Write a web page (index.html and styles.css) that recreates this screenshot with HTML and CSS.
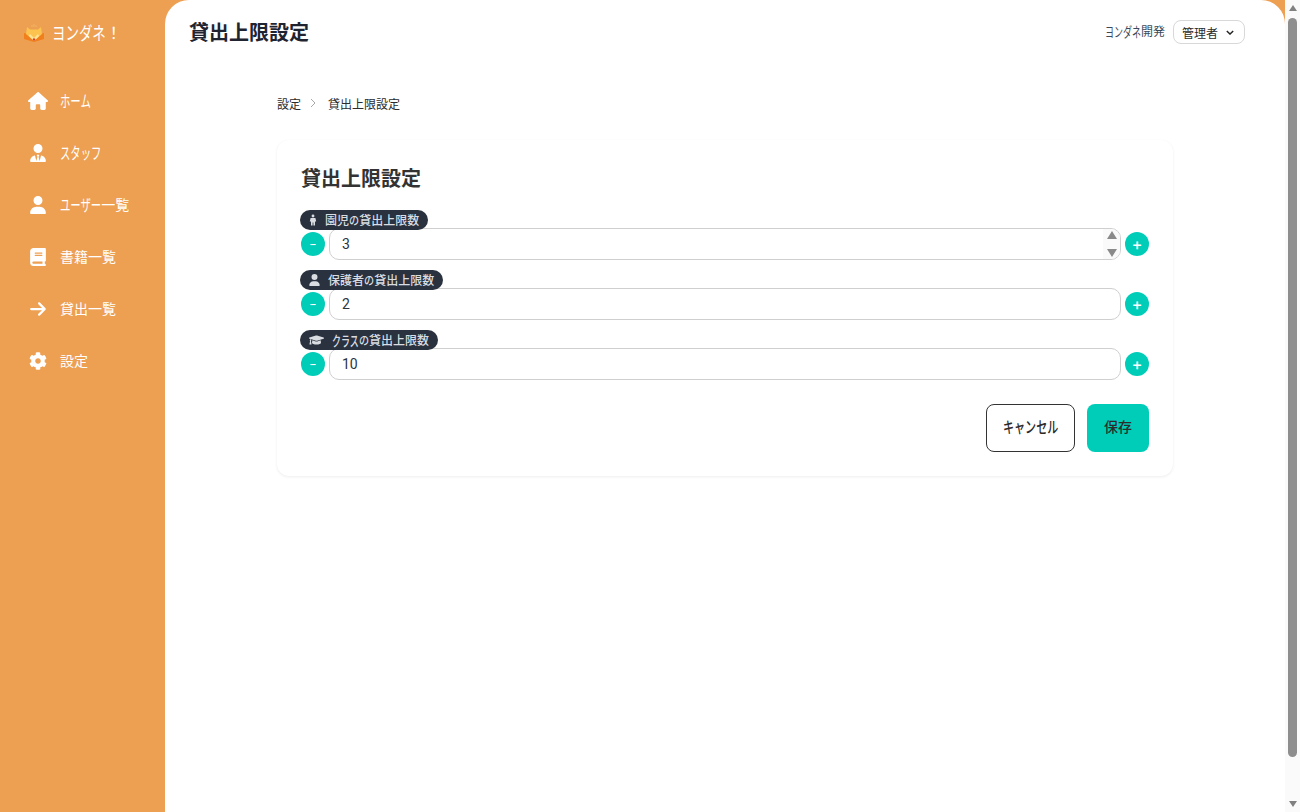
FILE: index.html
```html
<!DOCTYPE html>
<html lang="ja">
<head>
<meta charset="utf-8">
<title>貸出上限設定</title>
<link rel="stylesheet" href="styles.css">
</head>
<body>
<div class="app">
  <aside class="sidebar">
    <div class="brand">
      <svg class="brand-logo" viewBox="0 0 20 18" aria-hidden="true">
        <path d="M0 9l10 3 10-3v6l-10 3-10-3z" fill="#f07f1c"/>
        <path d="M3 3l3 2.500h8L17 3l1 7-8 7-8-7z" fill="#fcc34f"/>
        <path d="M6 10l4 4 4-4 1 2-5 5-5-5z" fill="#fde49a"/>
        <path d="M8 1v2M10 0v3M12 1v2" stroke="#f4b45e" stroke-width="1"/>
        <circle cx="10" cy="15.500" r="1.200" fill="#d8402a"/>
      </svg>
      <span class="label"><span class="kana k4">ヨンダネ</span>！</span>
    </div>
    <nav class="nav">
      <a class="nav-item"><span class="nav-icon"><svg class="ico-home" viewBox="0 0 576 512"><path d="M575.800 255.500c0 18-15 32.100-32 32.100h-32l.7 160.200c0 2.700-.2 5.400-.5 8.100V472c0 22.100-17.900 40-40 40H456c-1.100 0-2.200 0-3.300-.1c-1.400 .1-2.800 .1-4.200 .1H416 392c-22.100 0-40-17.900-40-40V448 384c0-17.700-14.300-32-32-32H256c-17.700 0-32 14.300-32 32v64 24c0 22.100-17.900 40-40 40H160 128.100c-1.500 0-3-.1-4.500-.2c-1.200 .1-2.400 .2-3.600 .2H104c-22.100 0-40-17.900-40-40V360c0-.9 0-1.900 .1-2.800V287.600H32c-18 0-32-14-32-32.100c0-9 3-17 10-24L266.400 8c7-7 15-8 22-8s15 2 21 7L564.800 231.500c8 7 12 15 11 24z"/></svg></span><span class="label"><span class="kana k3">ホーム</span></span></a>
      <a class="nav-item"><span class="nav-icon"><svg class="ico-user" viewBox="0 0 448 512"><path d="M96 128a128 128 0 1 0 256 0A128 128 0 1 0 96 128zm94.500 200.200l18.600 31L175.800 483.100l-36-146.900c-2-8.100-9.800-13.400-17.900-11.300C51.900 342.400 0 405.800 0 481.300c0 17 13.800 30.700 30.700 30.700H162.500c0 0 0 0 .1 0H168 280h5.500c0 0 0 0 .1 0H417.300c17 0 30.700-13.800 30.700-30.700c0-75.500-51.900-138.900-121.900-156.400c-8.100-2-15.900 3.300-17.900 11.300l-36 146.900L238.900 359.200l18.600-31c6.400-10.700-1.300-24.200-13.700-24.200H224 204.300c-12.400 0-20.100 13.600-13.700 24.200z"/></svg></span><span class="label"><span class="kana k4">スタッフ</span></span></a>
      <a class="nav-item"><span class="nav-icon"><svg class="ico-user" viewBox="0 0 448 512"><path d="M224 256A128 128 0 1 0 224 0a128 128 0 1 0 0 256zm-45.700 48C79.800 304 0 383.800 0 482.300C0 498.700 13.300 512 29.700 512H418.300c16.400 0 29.700-13.300 29.700-29.700C448 383.800 368.200 304 269.700 304H178.300z"/></svg></span><span class="label"><span class="kana k4">ユーザー</span>一覧</span></a>
      <a class="nav-item"><span class="nav-icon"><svg class="ico-user" viewBox="0 0 448 512"><path d="M96 0C43 0 0 43 0 96V416c0 53 43 96 96 96H384h32c17.700 0 32-14.300 32-32s-14.300-32-32-32V384c17.700 0 32-14.300 32-32V32c0-17.700-14.300-32-32-32H384 96zm0 384H352v64H96c-17.700 0-32-14.300-32-32s14.300-32 32-32zm32-240c0-8.800 7.200-16 16-16H336c8.800 0 16 7.200 16 16s-7.200 16-16 16H144c-8.800 0-16-7.200-16-16zm16 48H336c8.800 0 16 7.200 16 16s-7.200 16-16 16H144c-8.800 0-16-7.200-16-16s7.200-16 16-16z"/></svg></span><span class="label">書籍一覧</span></a>
      <a class="nav-item"><span class="nav-icon"><svg class="ico-user" viewBox="0 0 448 512"><path d="M438.600 278.600c12.500-12.500 12.500-32.800 0-45.300l-160-160c-12.500-12.500-32.800-12.500-45.300 0s-12.500 32.800 0 45.300L338.800 224 32 224c-17.700 0-32 14.300-32 32s14.300 32 32 32l306.700 0L233.400 393.400c-12.500 12.500-12.500 32.800 0 45.300s32.800 12.500 45.300 0l160-160z"/></svg></span><span class="label">貸出一覧</span></a>
      <a class="nav-item"><span class="nav-icon"><svg class="ico-gear" viewBox="0 0 512 512"><path d="M487.400 315.700l-42.600-24.600c4.300-23.200 4.300-47 0-70.200l42.600-24.600c4.900-2.800 7.100-8.600 5.500-14-11.100-35.600-30-67.800-54.700-94.600-3.800-4.100-10-5.100-14.800-2.300L380.800 110c-17.900-15.400-38.500-27.300-60.800-35.100V25.800c0-5.600-3.900-10.500-9.400-11.700-36.700-8.200-74.300-7.800-109.200 0-5.500 1.200-9.400 6.100-9.400 11.700V75c-22.200 7.900-42.800 19.800-60.800 35.100L88.700 85.500c-4.900-2.800-11-1.900-14.800 2.300-24.700 26.700-43.600 58.900-54.700 94.600-1.700 5.400.6 11.200 5.500 14L67.300 221c-4.300 23.200-4.300 47 0 70.200l-42.600 24.600c-4.900 2.800-7.100 8.600-5.500 14 11.100 35.600 30 67.800 54.700 94.600 3.800 4.100 10 5.100 14.800 2.300l42.600-24.600c17.900 15.400 38.500 27.300 60.800 35.100v49.200c0 5.600 3.900 10.500 9.400 11.700 36.700 8.200 74.300 7.800 109.200 0 5.500-1.200 9.400-6.100 9.400-11.700v-49.200c22.200-7.900 42.800-19.800 60.800-35.100l42.600 24.600c4.900 2.800 11 1.900 14.800-2.300 24.700-26.700 43.600-58.900 54.700-94.600 1.500-5.500-.7-11.300-5.600-14.100zM256 336c-44.100 0-80-35.900-80-80s35.900-80 80-80 80 35.900 80 80-35.900 80-80 80z"/></svg></span><span class="label">設定</span></a>
    </nav>
  </aside>

  <main class="main">
    <header class="topbar">
      <h1 class="page-title">貸出上限設定</h1>
      <div class="topbar-right">
        <span class="org"><span class="kana k4">ヨンダネ</span>開発</span>
        <div class="role-select">管理者
          <svg class="chev" viewBox="0 0 10 6"><path d="M1 1l4 4 4-4" fill="none" stroke="#222" stroke-width="1.700"/></svg>
        </div>
      </div>
    </header>

    <div class="content">
      <div class="crumbs">
        <span>設定</span>
        <svg class="crumb-sep" viewBox="0 0 6 10"><path d="M1 1l4 4-4 4" fill="none" stroke="#a8a8a8" stroke-width="1"/></svg>
        <span>貸出上限設定</span>
      </div>

      <section class="card">
        <h2 class="card-title">貸出上限設定</h2>

        <div class="field">
          <div class="badge badge-a"><svg class="badge-ico-child" viewBox="0 0 10 14"><circle cx="5" cy="2" r="1.800"/><path d="M2 4.500h6l1 4.500H7.500V14H5.500V10h-1V14H2.500V9H1z"/></svg><span class="label">園児<span class="kana no k1">の</span>貸出上限数</span></div>
          <div class="stepper">
            <button class="step step-minus">−</button>
            <div class="input-wrap">
              <input class="num" type="text" value="3">
              <span class="spin"><i class="spin-up"></i><i class="spin-down"></i></span>
            </div>
            <button class="step step-plus">+</button>
          </div>
        </div>

        <div class="field">
          <div class="badge badge-b"><svg class="badge-ico-user" viewBox="0 0 448 512"><path d="M224 256A128 128 0 1 0 224 0a128 128 0 1 0 0 256zm-45.700 48C79.800 304 0 383.800 0 482.300C0 498.700 13.300 512 29.700 512H418.300c16.400 0 29.700-13.300 29.700-29.700C448 383.800 368.200 304 269.700 304H178.300z"/></svg><span class="label">保護者<span class="kana no k1">の</span>貸出上限数</span></div>
          <div class="stepper">
            <button class="step step-minus">−</button>
            <div class="input-wrap"><input class="num" type="text" value="2"></div>
            <button class="step step-plus">+</button>
          </div>
        </div>

        <div class="field">
          <div class="badge badge-c"><svg class="badge-ico-cap" viewBox="0 0 640 512"><path d="M622.340 153.200L343.400 67.500c-15.200-4.670-31.600-4.670-46.790 0L17.660 153.200c-23.540 7.230-23.540 38.360 0 45.590l48.630 14.940c-10.670 13.190-17.230 29.280-17.880 46.900C38.780 266.150 32 276.110 32 288c0 10.780 5.680 19.850 13.860 25.650L20.330 428.530C18.110 438.520 25.710 448 35.940 448h56.110c10.240 0 17.840-9.480 15.620-19.470L82.140 313.650C90.320 307.850 96 298.780 96 288c0-11.570-6.470-21.250-15.660-26.870.76-15.020 8.440-28.300 20.690-36.720L296.600 284.500c9.060 2.780 26.440 6.250 46.790 0l278.950-85.700c23.550-7.240 23.550-38.360 0-45.600zM352.790 315.090c-28.530 8.760-52.840 3.920-65.590 0l-145.020-44.550L128 384c0 35.350 85.960 64 192 64s192-28.650 192-64l-14.180-113.470-145.030 44.560z"/></svg><span class="label"><span class="kana k3">クラス</span><span class="kana no k1">の</span>貸出上限数</span></div>
          <div class="stepper">
            <button class="step step-minus">−</button>
            <div class="input-wrap"><input class="num" type="text" value="10"></div>
            <button class="step step-plus">+</button>
          </div>
        </div>

        <div class="actions">
          <button class="btn btn-cancel"><span class="kana k5">キャンセル</span></button>
          <button class="btn btn-save">保存</button>
        </div>
      </section>
    </div>
  </main>

  <div class="scrollbar">
    <i class="sb-up"></i>
    <div class="sb-thumb"></div>
    <i class="sb-down"></i>
  </div>
</div>
</body>
</html>
```
FILE: styles.css
```css
* { box-sizing: border-box; }
html, body { margin: 0; height: 100%; overflow: hidden; }
body {
  font-family: "Inter", "Noto Sans CJK JP", sans-serif;
  color: #2b2b2b;
  background: #ed9f52;
}
.app { display: flex; height: 812px; }

/* The reference font has narrow, tall katakana; squeeze those runs to its widths. */
.kana {
  display: inline-block;
  transform: scale(var(--kx), var(--ky, 1.14));
  transform-origin: 0 50%;
  margin-right: calc((var(--kx) - 1) * var(--kn) * 1em);
}
.k1 { --kn: 1; }
.k3 { --kn: 3; }
.k4 { --kn: 4; }
.k5 { --kn: 5; }
.kana.no { --kx: .84; --ky: 1; }
.label { display: block; margin-bottom: 2px; white-space: nowrap; }

.sidebar { width: 165px; flex: none; background: #ed9f52; color: #fff; padding-top: 21px; --kx: .74; }
.brand { display: flex; align-items: center; gap: 8px; height: 24px; padding-left: 24px; font-size: 16px; --kx: .84; }
.brand-logo { width: 20px; height: 18px; }
.nav { display: flex; flex-direction: column; margin-top: 30px; }
.nav-item { display: flex; align-items: center; height: 52px; padding-left: 26px; font-size: 14px; color: #fff; }
.nav-icon { width: 24px; height: 24px; margin-right: 10px; display: flex; align-items: center; justify-content: center; fill: #fff; }
.ico-home { width: 20px; height: 18px; }
.ico-user { width: 16px; height: 18px; }
.ico-gear { width: 18px; height: 18px; }

.main { width: 1120px; flex: none; background: #fff; border-radius: 24px 24px 0 0; }
.topbar { display: flex; align-items: center; justify-content: space-between; height: 64px; padding: 0 40px 0 24px; }
.page-title { margin: 0; padding-top: 2px; font-size: 20px; font-weight: 700; color: #1f2430; line-height: 28px; }
.topbar-right { display: flex; align-items: center; gap: 8px; }
.org { margin-bottom: 3px; font-size: 12px; color: #3c4a57; --kx: .75; }
.role-select { display: flex; align-items: center; justify-content: space-between; width: 72px; height: 24px; padding: 0 10px 0 8px; border: 1px solid #d8d8d8; border-radius: 8px; font-size: 12px; color: #2b2b2b; }
.chev { width: 8px; height: 5px; }

.content { width: 896px; margin: 0 auto; padding-top: 29px; }
.crumbs { display: flex; align-items: center; height: 20px; font-size: 12px; color: #2b2b2b; }
.crumb-sep { width: 6px; height: 10px; margin: 0 12px 0 9px; }
.card { margin-top: 27px; padding: 24px; background: #fff; border-radius: 12px; box-shadow: 0 1px 3px rgba(0,0,0,.07), 0 0 1px rgba(0,0,0,.03); }
.card-title { margin: 0 0 17px; padding-top: 1px; font-size: 20px; line-height: 28px; font-weight: 700; color: #333; }

.field { display: flex; flex-direction: column; align-items: flex-start; margin-bottom: 10px; }
.badge { position: relative; z-index: 1; display: flex; align-items: center; flex: none; height: 20px; margin: 0 0 -2px -1px; border-radius: 10px; background: #2a323f; color: #d9dde2; font-size: 12px; font-weight: 500; --kx: .75; }
.badge-a { width: 128px; padding-left: 9px; }
.badge-b { width: 143px; padding-left: 9px; }
.badge-c { width: 138px; padding-left: 9px; }
.badge svg { fill: #d9dde2; }
.badge-ico-child { width: 8px; height: 12px; margin-right: 8px; }
.badge-ico-user { width: 11px; height: 12px; margin-right: 8px; }
.badge-ico-cap { width: 15px; height: 12px; margin-right: 8px; }

.stepper { display: flex; align-items: center; gap: 4px; width: 100%; height: 32px; }
.step { width: 24px; height: 24px; padding: 0 0 1px; border: 0; border-radius: 50%; background: #00cdb8; color: #fff; font-family: "Inter", sans-serif; font-weight: 500; line-height: 22px; }
.step-minus { font-size: 11px; }
.step-plus { font-size: 16px; }
.input-wrap { position: relative; flex: 1; }
.num { display: block; width: 100%; height: 32px; padding: 0 12px; border: 1px solid #cfcfcf; border-radius: 10px; background: #fff; color: #2b3440; font: 14px "Roboto", sans-serif; outline: 0; }
.spin { position: absolute; top: 1px; right: 1px; bottom: 1px; width: 17px; display: flex; flex-direction: column; justify-content: space-between; align-items: center; padding: 2px 0 2px; background: #fafafa; border-radius: 0 9px 9px 0; }
.spin-up { border: 5px solid transparent; border-top: 0; border-bottom: 8px solid #8a8a8a; }
.spin-down { border: 5px solid transparent; border-bottom: 0; border-top: 8px solid #8a8a8a; }

.actions { display: flex; justify-content: flex-end; gap: 12px; margin-top: 24px; }
.btn { height: 48px; padding: 0 0 5px; border-radius: 8px; font: 500 14px "Noto Sans CJK JP", sans-serif; color: #2b2b2b; }
.btn-cancel { width: 89px; background: #fff; border: 1px solid #333; --kx: .79; }
.btn-save { width: 62px; background: #00cdb8; border: 0; }

.scrollbar { width: 15px; flex: none; background: #fafafa; display: flex; flex-direction: column; align-items: center; padding: 5px 0 0; }
.sb-thumb { width: 9px; flex: none; height: 739px; margin: 7px 0 0; background: #8e8e8e; border-radius: 5px; }
.sb-up { border: 4.500px solid transparent; border-top: 0; border-bottom: 6px solid #808080; }
.sb-down { border: 4.500px solid transparent; border-bottom: 0; border-top: 6px solid #808080; margin-top: 44px; }
```
